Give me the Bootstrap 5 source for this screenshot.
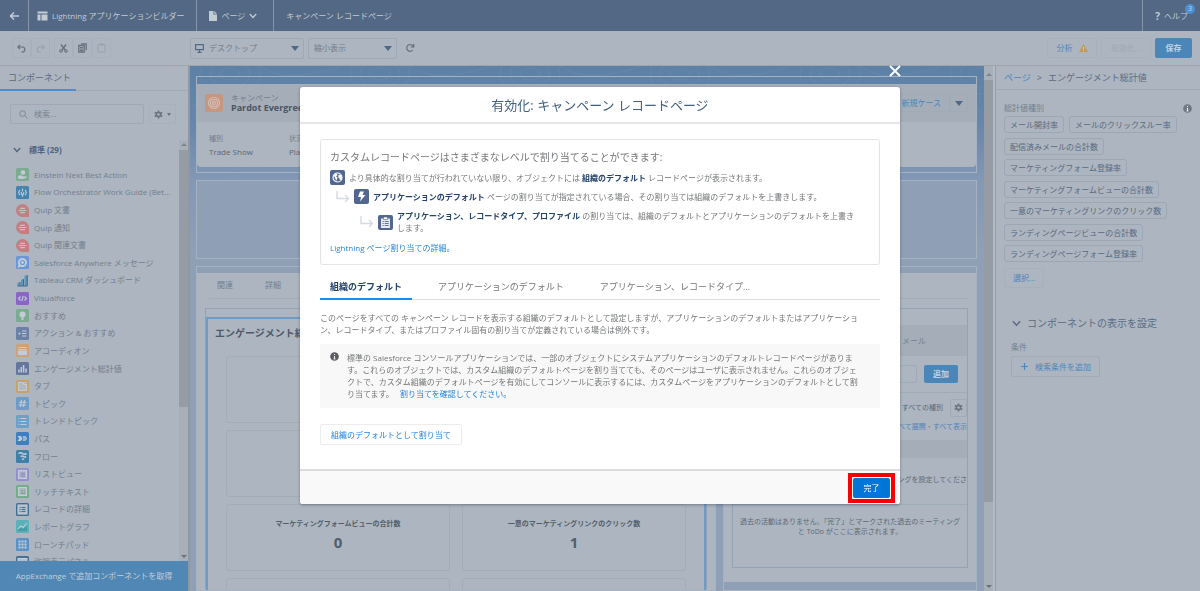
<!DOCTYPE html>
<html lang="ja">
<head>
<meta charset="utf-8">
<meta name="viewport" content="width=device-width, initial-scale=1">
<title>Lightning アプリケーションビルダー</title>
<link href="https://cdn.jsdelivr.net/npm/bootstrap@5.3.0/dist/css/bootstrap.min.css" rel="stylesheet">
<style>
:root{--surface:#acb5c0;--line:#a0a9b5;--ink:#5b6b82;--soft:#737f8e;--lnk:#4c86bd;--navy:#526884}
body{font-family:"Open Sans","Noto Sans CJK JP",sans-serif;font-size:8px;line-height:12px;background:var(--surface);color:var(--soft)}
a{text-decoration:none;color:var(--lnk)}
svg{flex:none;display:block}
button,input,select{font-family:inherit}
.btn,.form-control,.form-select{font-size:8px;line-height:12px;border-radius:2px}
.t7{font-size:7px;line-height:10px}
.t9{font-size:9px}
.t10{font-size:10px;line-height:14px}
/* top bar */
.topbar{height:31px;background:var(--navy);color:#c3cbd5}
.topbar .cell{border-right:1px solid #8695a8;height:31px}
.topbar .btn.cell{border-width:0 1px 0 0;border-radius:0}
.topbar .help{border-left:1px solid #8695a8}
.topbar a,.topbar button{color:#c3cbd5}
.note-dot{position:absolute;top:4px;right:5px;width:10px;height:10px;font-size:7px;line-height:10px;background:#4d8fd0;color:#c3d6ea;text-align:center;border-radius:50%}
/* tool bar */
.tools{height:35px;border-bottom:1px solid #a0a5ac}
.tools .btn{height:20px;border:1px solid #a7b0bb;color:var(--lnk)}
.tools .ib{width:19px;padding:0;display:flex;align-items:center;justify-content:center;color:#65717f}
.tools .act{width:50px;padding:0;display:flex;align-items:center;justify-content:center;gap:6px}
.tools .dim{color:#98a3af}
.devices{margin-left:79px}
.pick{height:21px;border:1px solid #9fa9b5;border-radius:2px;color:var(--soft)}
.pick select{appearance:none;border:0;background:none;color:inherit;outline:0;width:100%;height:19px;padding:0 5px}
.caret{width:0;height:0;border:4px solid transparent;border-top:5px solid #4f6886;border-bottom:0;flex:none}
.caret.mini{border-width:3px 2px 0;border-top-color:#68747f}
/* left panel */
.leftp{width:188px;flex:none}
.ptab{height:25px;border-bottom:1px solid #a0a9b5}
.ptab a{width:76px;height:25px;border-bottom:2px solid #4a8fd6;color:var(--ink);line-height:24px;padding-left:8px}
.finder{padding:13px 12px 8px 10px;gap:5px}
.find{height:20px;border:1px solid #9fa8b4;border-radius:2px}
.find input{border:0;background:none;outline:0;width:90px;color:#6f7b8a}
.find input::placeholder{color:#7b8796;opacity:1}
.group{padding:4px 0 8px 13px;margin-bottom:2px;color:#4f6480}
.items{min-height:0;overflow:hidden}
.items li{flex:0 0 4.46%;display:flex;align-items:center;gap:5px;padding-left:16px;white-space:nowrap}
.sbar{width:9px;background:#a7afb9}
.sbar .thumb{background:#959ca6;height:61%}
.sbar .thumb.tall{height:81%}
.tri{width:0;height:0;border:3px solid transparent;flex:none}
.tri.up{border-bottom-color:#7d858f}
.tri.dn{border-top-color:#68707a}
.appx{height:30px;background:#5087b4;color:#c0cfdd}
/* canvas */
.stage{min-width:0;border-left:2px solid #9198a2;background:linear-gradient(#5c80a6 0,#6787ab 60px,#8398b5 115px,#8f9fb6 190px);position:relative;overflow:hidden}
.topo{position:absolute;inset:0;width:100%;height:130px}
.zone{border:1px solid #a6b2c2}
.paper{background:var(--surface)}
.record{height:83px}
.cb{border:1px solid #a0abb8;height:18px;color:var(--lnk)}
.tabline{height:26px;border-bottom:1px solid #a3acb7;line-height:24px;gap:32px}
.dash{border:1px solid #94a2b4;margin-top:9px}
.hl{border:2px solid #6e9bc4;border-bottom:0;padding:7px 18px 0}
.hl h2{margin:0 0 16px -11px;color:#4f5a68;font-weight:700}
.metric{border:1px solid #a3adb8;border-radius:3px;height:67px;padding-top:14px}
.metric b{font-size:15px;line-height:18px}
.metrics{display:grid;grid-template-columns:1fr 1fr;gap:7px 12px;color:#535e6b}
.band{background:#a5adb8}
.save{background:#4b86b8;color:#c0d2e3!important}
.gearb{border:1px solid #a1abb6;height:18px;width:17px;color:#68747f}
.dark{color:#5e6975}
/* right panel */
.rightp{width:205px;flex:none;border-left:1px solid #989ea8}
.crumb{height:24px;border-bottom:1px solid #a0a9b5;gap:6px;color:var(--ink)}
.pills{height:146px;align-content:space-between;column-gap:5px;margin-top:2px}
.pill{height:17px;border:1px solid #9ca7b4;border-radius:3px;padding:0 5px;line-height:15px;color:#59697f;white-space:nowrap}
/* dialog */
.modal{--bs-modal-margin:0}
.dlg{width:50%;max-width:none;margin:87px auto 0}
.modal-content{border:0;border-radius:3px;color:#747678;box-shadow:0 1px 3px rgba(60,70,85,.5);font-size:8px}
.modal-header{height:37px;border-bottom:2px solid #e6e6e6;justify-content:center;padding:0}
.modal-header h1{font-size:13px;line-height:20px;color:#44607f;font-weight:400;margin:0}
.modal-body{padding:15px 20px 0;min-height:345px}
.shut{position:absolute;top:-22px;right:-1px;border:0;background:none;padding:0;color:#fff}
.box{border:1px solid #e4e4e4;border-radius:3px;padding:10px 9px}
.modal b{color:#24426b}
.modal a{color:#2484dc}
.gap6{margin-bottom:6px}
.sq{width:15px;height:15px;border-radius:2px;background:#52678f;flex:none;display:flex;align-items:center;justify-content:center;color:#fff}
.lv3{padding-left:30px}
.dtabs{border-bottom:1px solid #dedede;height:25px;margin-top:10px}
.dtabs a{font-size:9px;line-height:24px;height:25px;padding:0 10px;color:#747678}
.dtabs a.on{color:#24426b;font-weight:700;border-bottom:2px solid #1b8cf2}
.info{background:#f8f8f8;padding:8px 10px}
.assign{height:21px;padding:0 10px;border:1px solid #ececec;color:#2484dc}
.modal-footer{height:35px;background:#f9f9f9;border-top:2px solid #ddd;padding:0 5px;border-radius:0 0 3px 3px}
.ring{border:4px solid #f80008;padding:1px;margin:0;background:#fff}
.done{background:#0176d6;color:#fff;height:20px;width:37px;padding:0;border:0;display:block}
</style>
</head>
<body>
<svg width="0" height="0" class="position-absolute" aria-hidden="true">
<defs>
<symbol id="gear" viewBox="0 0 10 10"><path d="M5 .6v8.800M.9 2.700l8.200 4.600M.9 7.300l8.200-4.600" stroke="currentColor" stroke-width="1.800"/><circle cx="5" cy="5" r="3.100" fill="currentColor"/><circle cx="5" cy="5" r="1.400" fill="#acb5c0"/></symbol>
<symbol id="down" viewBox="0 0 8 6"><path d="M.8 1l3.200 3.500L7.200 1" fill="none" stroke="currentColor" stroke-width="1.300"/></symbol>
<symbol id="inf" viewBox="0 0 10 10"><circle cx="5" cy="5" r="4.800" fill="currentColor"/><path d="M5 2.200v1.200M5 4.400v3.400M4 7.600h2" stroke="#e8eaec" stroke-width="1.200"/></symbol>
<symbol id="elbow" viewBox="0 0 14 12"><path d="M1 0v7.500h11M9 4l3.500 3.500L9 11" fill="none" stroke="#d5dae4" stroke-width="1.400"/></symbol>
<symbol id="quip" viewBox="0 0 13 13"><path d="M6.500 0A6.500 6.500 0 1 0 6.500 13H13V6.500A6.500 6.500 0 0 0 6.500 0z" fill="#c27f81"/><path d="M4 4.300h5M2.500 6.500h8M4 8.700h5" stroke="#ccbfc4" stroke-width="1.200"/></symbol>
</defs>
</svg>

<div class="d-flex flex-column vh-100 overflow-hidden">
<header class="topbar d-flex align-items-center flex-shrink-0">
  <a href="#" class="cell d-flex align-items-center ps-2 pe-2" aria-label="戻る"><svg width="12" height="10" viewBox="0 0 12 10"><path d="M6 1.500L2.500 5 6 8.500M2.500 5H11" fill="none" stroke="currentColor" stroke-width="1.500"/></svg></a>
  <div class="cell d-flex align-items-center gap-1 ps-2 pe-2"><svg width="11" height="10" viewBox="0 0 11 10"><path d="M.5.500h10v2H.5zM.5 3.500h3v6h-3zM4.500 3.500h6v6h-6z" fill="currentColor"/></svg><span class="pe-1">Lightning アプリケーションビルダー</span></div>
  <button class="cell btn p-0 ps-2 d-flex align-items-center gap-1"><svg width="8" height="10" viewBox="0 0 8 10" class="ms-1"><path d="M0 0h4.500v3.500H8V10H0zM5.300 0L8 2.700H5.300z" fill="currentColor"/></svg><span>ページ</span><svg width="8" height="6" class="me-3"><use href="#down"/></svg></button>
  <span class="ps-2 ms-1">キャンペーン レコードページ</span>
  <a href="#" class="help ms-auto d-flex align-items-center position-relative h-100 ps-2 pe-1"><b class="px-1 t10">?</b><span class="pe-2">ヘルプ</span><span class="note-dot">3</span></a>
</header>

<div class="tools d-flex align-items-center flex-shrink-0">
  <div class="d-flex ms-2 ps-1">
    <button class="btn ib" aria-label="元に戻す"><svg width="9" height="9" viewBox="0 0 9 9"><path d="M3 .8L.9 3 3 5.200M1 3h4.300a2.500 2.500 0 0 1 0 5H4.300" fill="none" stroke="currentColor" stroke-width="1.200"/></svg></button>
    <button class="btn ib me-1 dim" aria-label="やり直す"><svg width="9" height="9" viewBox="0 0 9 9"><path d="M6 .8L8.100 3 6 5.200M8 3H3.700a2.500 2.500 0 0 0 0 5h1" fill="none" stroke="currentColor" stroke-width="1.200"/></svg></button>
    <button class="btn ib" aria-label="切り取り"><svg width="9" height="9" viewBox="0 0 9 9"><path d="M2 .5l4 5.500M7 .5L3 6" stroke="currentColor" stroke-width="1.300"/><circle cx="2" cy="7" r="1.300" fill="none" stroke="currentColor"/><circle cx="7" cy="7" r="1.300" fill="none" stroke="currentColor"/></svg></button>
    <button class="btn ib" aria-label="コピー"><svg width="9" height="10" viewBox="0 0 9 10"><path d="M3 .8h5.200v6.400M.8 2.500h5.400v6.500H.8z" fill="none" stroke="currentColor" stroke-width="1.300"/><path d="M2 4.500h3M2 6h3M2 7.500h3" stroke="currentColor"/></svg></button>
    <button class="btn ib dim" aria-label="貼り付け"><svg width="9" height="10" viewBox="0 0 9 10"><path d="M1 1.500h7V9H1z" fill="none" stroke="currentColor"/><path d="M3 .5h3v2H3z" fill="currentColor"/></svg></button>
  </div>
  <div class="devices d-flex align-items-center gap-1">
    <div class="pick d-flex align-items-center ps-1" style="width:114px"><svg width="9" height="9" viewBox="0 0 9 9"><path d="M.6.600h7.800v5H.6zM4.500 6v2M2.500 8.400h4" fill="none" stroke="#526a88" stroke-width="1.200"/></svg><select aria-label="デバイス"><option>デスクトップ</option></select><span class="caret me-1"></span></div>
    <div class="pick d-flex align-items-center" style="width:89px"><select aria-label="ズーム"><option>縮小表示</option></select><span class="caret me-1"></span></div>
    <button class="btn border-0 p-0 ms-1" aria-label="更新"><svg width="10" height="10" viewBox="0 0 10 10"><path d="M7.800 7A3.400 3.400 0 1 1 7.500 2.500L8.500 4M8.700 1v3H5.700" fill="none" stroke="#65717f" stroke-width="1.200"/></svg></button>
  </div>
  <div class="ms-auto d-flex gap-1 me-2">
    <button class="btn act">分析<svg width="9" height="8" viewBox="0 0 9 8"><path d="M4.500 0L9 8H0z" fill="#bf9b55"/><path d="M4.500 2.800v2.500M4.500 6.200v1" stroke="#d5cdbb"/></svg></button>
    <button class="btn act dim" disabled>有効化...</button>
    <button class="btn save p-0 border-0 fw-bold" style="width:37px">保存</button>
  </div>
</div>

<main class="d-flex flex-fill" style="min-height:0">
<aside class="leftp d-flex flex-column">
  <nav class="ptab t9"><a href="#" class="d-block">コンポーネント</a></nav>
  <div class="finder d-flex">
    <label class="find d-flex align-items-center px-1 flex-fill"><svg width="9" height="9" viewBox="0 0 9 9" class="mx-1"><circle cx="3.600" cy="3.600" r="2.800" fill="none" stroke="#7d8a99"/><path d="M5.700 5.700L8.500 8.500" stroke="#7d8a99"/></svg><input type="text" placeholder="検索..." aria-label="検索"></label>
    <button class="btn p-0 px-1 d-flex align-items-center gap-1" aria-label="設定" style="border:1px solid #a7b0bb;height:20px;color:#68747f"><svg width="9" height="9"><use href="#gear"/></svg><span class="caret mini"></span></button>
  </div>
  <div class="d-flex flex-fill pt-1 mt-1" style="min-height:0">
    <div class="d-flex flex-column flex-fill" style="min-width:0">
      <div class="group d-flex align-items-center fw-bold"><svg width="8" height="6" class="me-1"><use href="#down"/></svg><span class="ps-1">標準 (29)</span></div>
      <ul class="items list-unstyled m-0 d-flex flex-column flex-fill" id="items"></ul>
    </div>
    <div class="sbar d-flex flex-column align-items-center"><span class="tri up mb-1"></span><div class="thumb w-100"></div><span class="tri dn mt-auto"></span></div>
  </div>
  <a href="#" class="appx d-flex align-items-center justify-content-center flex-shrink-0">AppExchange で追加コンポーネントを取得</a>
</aside>

<section class="stage d-flex flex-fill">
  <svg class="topo" aria-hidden="true"><defs><pattern id="tp" width="150" height="90" patternUnits="userSpaceOnUse"><g fill="none" stroke="#7f9bb9" stroke-width="1" opacity=".22"><ellipse cx="40" cy="8" rx="10" ry="6"/><ellipse cx="40" cy="8" rx="20" ry="13"/><ellipse cx="40" cy="8" rx="30" ry="20"/><ellipse cx="110" cy="60" rx="12" ry="18"/><ellipse cx="110" cy="60" rx="22" ry="30"/><path d="M70 0q20 14 50 8t30-8M0 40q30-8 60 20t90 0"/></g></pattern></defs><rect width="100%" height="100%" fill="url(#tp)"/></svg>
  <div class="flex-fill d-flex flex-column position-relative" style="padding:10px 7px 0 6px;min-width:0;gap:7px">
    <div class="zone flex-shrink-0" style="padding:7px 0 5px">
      <div class="record paper rounded-bottom-1">
        <div class="band d-flex align-items-center px-2" style="height:38px">
          <svg width="18" height="18" viewBox="0 0 18 18"><rect width="18" height="18" rx="2" fill="#c8967f"/><g fill="none" stroke="#d3bfb8" stroke-width="1.100"><circle cx="9" cy="9" r="5.500"/><circle cx="9" cy="9" r="3.500"/><circle cx="9" cy="9" r="1.400"/></g></svg>
          <div class="ps-2" style="line-height:10px"><div>キャンペーン</div><div class="t9 fw-bold" style="color:#4b5562">Pardot Evergreen Campaign</div></div>
          <button class="btn cb ms-auto p-0 px-2 rounded-0">新規ケース</button>
          <button class="btn cb p-0 px-1 rounded-0 d-flex align-items-center" aria-label="その他"><span class="caret"></span></button>
        </div>
        <div class="d-flex pt-2 ps-2 ms-1 t7" style="line-height:13px;margin-top:2px"><div style="width:80px">種別<br><span style="color:#5c6773;font-size:8px">Trade Show</span></div><div>状況<br><span style="color:#5c6773;font-size:8px">Planned</span></div></div>
      </div>
    </div>
    <div class="zone flex-shrink-0" style="height:79px;background:#8f9fb5"></div>
    <div class="d-flex flex-fill" style="min-height:0;gap:7px">
      <div class="zone d-flex flex-column" style="flex:0 0 520px;min-height:0;padding-top:6px">
        <div class="paper flex-fill px-2 overflow-hidden">
          <div class="tabline d-flex ps-2 ms-1"><a href="#" style="color:inherit">関連</a><a href="#" style="color:inherit">詳細</a></div>
          <div class="dash pt-2" style="border-bottom:0"><div class="hl">
            <h2 class="t10">エンゲージメント総計値</h2>
            <div class="metrics" id="metrics"></div>
          </div></div>
        </div>
      </div>
      <div class="zone flex-fill d-flex flex-column" style="min-width:0;padding-top:6px">
        <div class="paper px-2 overflow-hidden flex-fill t7 mb-2">
          <div class="tabline"></div>
          <div class="dash" style="height:260px">
            <div class="band d-flex align-items-center justify-content-end" style="height:31px;margin-top:16px;font-size:8px"><span style="padding-right:41px">メール</span></div>
            <div class="d-flex justify-content-end align-items-center" style="height:37px;border-bottom:1px solid #a1abb6;padding-right:9px;gap:7px"><input class="form-control bg-transparent p-0" aria-label="件名" style="height:18px;border-color:#a1abb6"><button class="btn save p-0 border-0 fw-bold flex-shrink-0" style="height:18px;width:34px">追加</button></div>
            <div class="d-flex justify-content-end align-items-center pt-1" style="gap:7px;height:25px"><span class="dark">条件: すべての期間・すべての活動・すべての種別</span><button class="btn gearb p-0 d-flex align-items-center justify-content-center" aria-label="設定"><svg width="9" height="9"><use href="#gear"/></svg></button></div>
            <div class="text-end pt-1 pb-2"><a href="#">更新</a>・<a href="#">すべて展開</a>・<a href="#">すべて表示</a></div>
            <div class="band" style="height:18px"></div>
            <div class="text-end dark text-nowrap" style="height:47px;line-height:43px;border-bottom:1px solid #9eabb9">ToDo の送信やミーティングを設定してくださ</div>
            <div class="text-center pt-2 mt-1 dark">過去の活動はありません。「完了」とマークされた過去のミーティング<br>と ToDo がここに表示されます。</div>
          </div>
        </div>
      </div>
    </div>
  </div>
  <div class="sbar d-flex flex-column align-items-center pt-1 position-relative"><span class="tri up mb-1"></span><div class="thumb tall w-100"></div><span class="tri dn mt-auto"></span></div>
  <div class="position-relative" style="width:2px;background:#b3bbc5"></div>
</section>

<aside class="rightp">
  <nav class="crumb d-flex align-items-center t9 ps-2"><a href="#">ページ</a><span>&gt;</span><span>エンゲージメント総計値</span></nav>
  <div class="ps-2">
    <div class="d-flex justify-content-between align-items-center pt-2 mt-1 pe-2"><span>総計値種別</span><svg width="9" height="9" style="color:#6f7985"><use href="#inf"/></svg></div>
    <div class="pills d-flex flex-wrap pe-2" id="pills"></div>
    <button class="btn py-0 px-2" style="height:20px;margin-top:6px;border:1px solid #a7b1bd;color:var(--lnk)">選択...</button>
  </div>
  <div class="ps-2 ms-1" style="padding-top:28px">
    <div class="d-flex align-items-center t10 ps-1 text-nowrap" style="color:var(--ink);gap:6px"><svg width="9" height="7"><use href="#down"/></svg>コンポーネントの表示を設定</div>
    <div class="pt-2 mt-1" style="line-height:10px;padding-left:3px">条件</div>
    <button class="btn py-0 mt-1 px-2 d-flex align-items-center" style="height:21px;margin-left:3px;border:1px solid #9fabb8;color:var(--lnk);gap:6px"><svg width="9" height="9" viewBox="0 0 9 9"><path d="M4.500 1v7M1 4.500h7" stroke="currentColor" stroke-width="1.200"/></svg>検索条件を追加</button>
  </div>
</aside>
</main>
</div>

<div class="modal show d-block" tabindex="-1" role="dialog" aria-labelledby="dlgTitle">
  <div class="modal-dialog dlg">
    <div class="modal-content">
      <button class="shut" aria-label="閉じる"><svg width="12" height="12" viewBox="0 0 12 12"><path d="M1 1l10 10M11 1L1 11" stroke="#fff" stroke-width="1.800"/></svg></button>
      <div class="modal-header"><h1 id="dlgTitle">有効化: キャンペーン レコードページ</h1></div>
      <div class="modal-body">
        <div class="box">
          <div class="t10 gap6">カスタムレコードページはさまざまなレベルで割り当てることができます:</div>
          <div class="d-flex align-items-center gap-1 mb-1"><span class="sq"><svg width="11" height="11" viewBox="0 0 11 11"><circle cx="5.500" cy="5.500" r="4.500" fill="none" stroke="#fff" stroke-width="1.200"/><path d="M1.800 3.500l2-1.800 1.700.6-.3 1.300-1.200.6 1.500 1.300-.4 1.800-1 1.500-.8-2.400zM6.500 3l2-.5 1.200 2-.3 2.700-1.500 1-.6-2.200-1.200-.8z" fill="#fff"/></svg></span><span>より具体的な割り当てが行われていない限り、オブジェクトには <b>組織のデフォルト</b> レコードページが表示されます。</span></div>
          <div class="d-flex align-items-center gap-1 gap6" style="padding-left:6px"><svg width="14" height="12"><use href="#elbow"/></svg><span class="sq"><svg width="9" height="11" viewBox="0 0 9 11"><path d="M3 .5h4L5.500 4h3L3 10.500l1-4.500H1z" fill="#fff"/></svg></span><span><b>アプリケーションのデフォルト</b> ページの割り当てが指定されている場合、その割り当ては組織のデフォルトを上書きします。</span></div>
          <div class="lv3 d-flex align-items-center gap-1"><svg width="14" height="12"><use href="#elbow"/></svg><span class="sq"><svg width="9" height="11" viewBox="0 0 9 11"><path d="M0 1.500h9V11H0z" fill="#e6e9ef"/><path d="M2.500 0h4v2.500h-4z" fill="#fff" stroke="#52678f" stroke-width=".6"/><path d="M1.500 4.500h1.200M1.500 6.500h1.200M1.500 8.500h1.200M3.700 4.500h4M3.700 6.500h4M3.700 8.500h4" stroke="#52678f" stroke-width=".9"/></svg></span><span><b>アプリケーション、レコードタイプ、プロファイル</b> の割り当ては、組織のデフォルトとアプリケーションのデフォルトを上書き<br>します。</span></div>
          <a href="#" class="d-block mt-1 pt-1">Lightning ページ割り当ての詳細。</a>
        </div>
        <nav class="dtabs d-flex gap-3"><a href="#" class="on">組織のデフォルト</a><a href="#">アプリケーションのデフォルト</a><a href="#">アプリケーション、レコードタイプ...</a></nav>
        <p class="mb-2 mt-2 pt-1">このページをすべての キャンペーン レコードを表示する組織のデフォルトとして設定しますが、アプリケーションのデフォルトまたはアプリケーショ<br>ン、レコードタイプ、またはプロファイル固有の割り当てが定義されている場合は例外です。</p>
        <div class="info d-flex gap-2"><svg width="9" height="9" style="color:#5b5d60"><use href="#inf"/></svg><div>標準の Salesforce コンソールアプリケーションでは、一部のオブジェクトにシステムアプリケーションのデフォルトレコードページがありま<br>す。これらのオブジェクトでは、カスタム組織のデフォルトページを割り当てても、そのページはユーザに表示されません。これらのオブジェ<br>クトで、カスタム組織のデフォルトページを有効にしてコンソールに表示するには、カスタムページをアプリケーションのデフォルトとして割<br>り当てます。 <a href="#" class="ps-1">割り当てを確認してください。</a></div></div>
        <button class="btn assign mt-3">組織のデフォルトとして割り当て</button>
      </div>
      <div class="modal-footer"><div class="ring"><button class="btn done">完了</button></div></div>
    </div>
  </div>
</div>

<script>
const w='#c3ccd6';
const box=(c,inner)=>`<svg width="13" height="13" viewBox="0 0 13 13"><rect width="13" height="13" rx="1.500" fill="${c}"/><g fill="none" stroke="${w}" stroke-width="1.100">${inner}</g></svg>`;
const quip='<svg width="13" height="13"><use href="#quip"/></svg>';
const items=[
 ['Einstein Next Best Action',box('#7cab91',`<circle cx="7" cy="4.500" r="1.700" fill="${w}"/><path d="M2.500 8.500q2-1.500 4 .500h3.500q-2 2-7.500 1z" fill="${w}"/>`)],
 ['Flow Orchestrator Work Guide (Bet...',box('#4583ad','<path d="M4 4q-2.500 2.500 0 5M9 4q2.500 2.500 0 5M5 6l1.500 4L8 6M6.500 2.500v3"/>')],
 ['Quip 文書',quip],['Quip 通知',quip],['Quip 関連文書',quip],
 ['Salesforce Anywhere メッセージ',box('#6c97d6',`<path d="M6.500 2.500a4 4 0 1 1-2 7.500L2.500 11l.5-2.500a4 4 0 0 1 3.500-6z" fill="${w}"/><circle cx="6.500" cy="6.500" r="2" stroke="#6c97d6"/>`)],
 ['Tableau CRM ダッシュボード','<svg width="13" height="13" viewBox="0 0 13 13"><path d="M1.500 8.500h2.500V12H1.500zM5 5.500h2.500V12H5zM8.500 1.500H11V12H8.500z" fill="#5796bd"/><path d="M4 8v4M7.500 5v7M1.500 12h9.800V1" stroke="#3f6b8c" fill="none"/></svg>'],
 ['Visualforce',box('#8a66c4','<path d="M4.500 4.500l-2 2 2 2M8.500 4.500l2 2-2 2M7.200 4l-1.400 5"/>')],
 ['おすすめ',box('#7cab91',`<circle cx="6.500" cy="5.500" r="2.500" fill="${w}"/><path d="M6.500 7v4" stroke-width="2"/>`)],
 ['アクション & おすすめ',box('#6a80a5','<path d="M6 4h4.500M6 6.500h4.500M6 9h4.500M2.500 6.500h2M3.500 5.500v2"/>')],
 ['アコーディオン',box('#cba37b',`<path d="M2.500 3.500h8M2.500 5.500h8" /><path d="M2.500 7h8v3.500h-8z" fill="${w}"/>`)],
 ['エンゲージメント総計値',box('#66769b','<path d="M3 10.500V7.500M5.300 10.500V5M7.600 10.500V3M10 10.500V6.500" stroke-width="1.500"/>')],
 ['タブ',box('#c4a466','<path d="M2.500 2.500h4.500l1 2h2.500v6h-8z" fill="#b1b8c0"/><path d="M8 2.800h3"/>')],
 ['トピック',box('#6f9cc5','<path d="M5.500 3l-1 7M8.500 3l-1 7M3 5.300h7.500M2.500 8h7.500"/>')],
 ['トレンドトピック',box('#6ba1c6','<path d="M4.500 3.500h6M4.500 6.500h6M4.500 9.500h6M2.300 3.500h1M2.300 6.500h1M2.300 9.500h1"/>')],
 ['パス',box('#3d7fc0',`<path d="M2.500 4.500h2L6 6.500 4.500 8.500h-2L4 6.500z" fill="${w}"/><path d="M7.500 4.800h1.700l1.300 1.700-1.300 1.700H7.500l.8-1.700z"/>`)],
 ['フロー',box('#3f80a8','<path d="M2.500 3.500q2.500-1.500 4 0t4 0M4.500 6.500q2-1 3 0t2.500 0M6 9.500q1-1 2 0" stroke-width="1.600"/>')],
 ['リストビュー',box('#9290cb','<rect x="2.500" y="2.500" width="8" height="8" fill="#b3b9cb"/><path d="M4.500 5h4.500M4.500 6.700h4.500M4.500 8.400h4.500" stroke="#8583bb" stroke-width=".9"/>')],
 ['リッチテキスト',box('#75ab8c','<rect x="2.500" y="2.500" width="8" height="8" fill="#b0bcc0"/><path d="M4.500 5h1.500v3M7.500 5h2M7.500 7h2M4.500 8.500h5" stroke="#75a287" stroke-width=".9"/>')],
 ['レコードの詳細',box('#456f91','<rect x="2" y="2" width="9" height="9" fill="#b5bfc9"/><path d="M3.500 4.500h1M3.500 6.500h1M3.500 8.500h1M5.500 4.500h4M5.500 6.500h4M5.500 8.500h4" stroke="#456f91"/>')],
 ['レポートグラフ',box('#5ab1b7',`<path d="M2 9l3-3 2 1.500L11 3"/><path d="M2 11V9.500l3-2 2 1.500 4-3v5z" fill="#469ca4" stroke="none"/>`)],
 ['ローンチパッド',box('#5a92c5','<path d="M2.500 3.500h8M2.500 6.500h8M2.500 9.500h8" stroke-width="2" stroke-dasharray="2 1"/>')],
 ['強調表示パネル',box('#456f91','<rect x="2" y="2.500" width="9" height="7" fill="#b5bfc9"/>')]
];
document.getElementById('items').innerHTML=items.map(([t,i])=>`<li>${i}<span>${t}</span></li>`).join('');
document.getElementById('pills').innerHTML=['メール開封率','メールのクリックスルー率','配信済みメールの合計数','マーケティングフォーム登録率','マーケティングフォームビューの合計数','一意のマーケティングリンクのクリック数','ランディングページビューの合計数','ランディングページフォーム登録率'].map(t=>`<span class="pill">${t}</span>`).join('');
document.getElementById('metrics').innerHTML=[['',''],['',''],['',''],['',''],['マーケティングフォームビューの合計数','0'],['一意のマーケティングリンクのクリック数','1'],['',''],['','']].map(([t,n])=>`<div class="metric text-center t7">${t?`<div class="fw-bold mb-1">${t}</div><b>${n}</b>`:''}</div>`).join('');
</script>
<script src="https://cdn.jsdelivr.net/npm/bootstrap@5.3.0/dist/js/bootstrap.bundle.min.js"></script>
</body>
</html>
